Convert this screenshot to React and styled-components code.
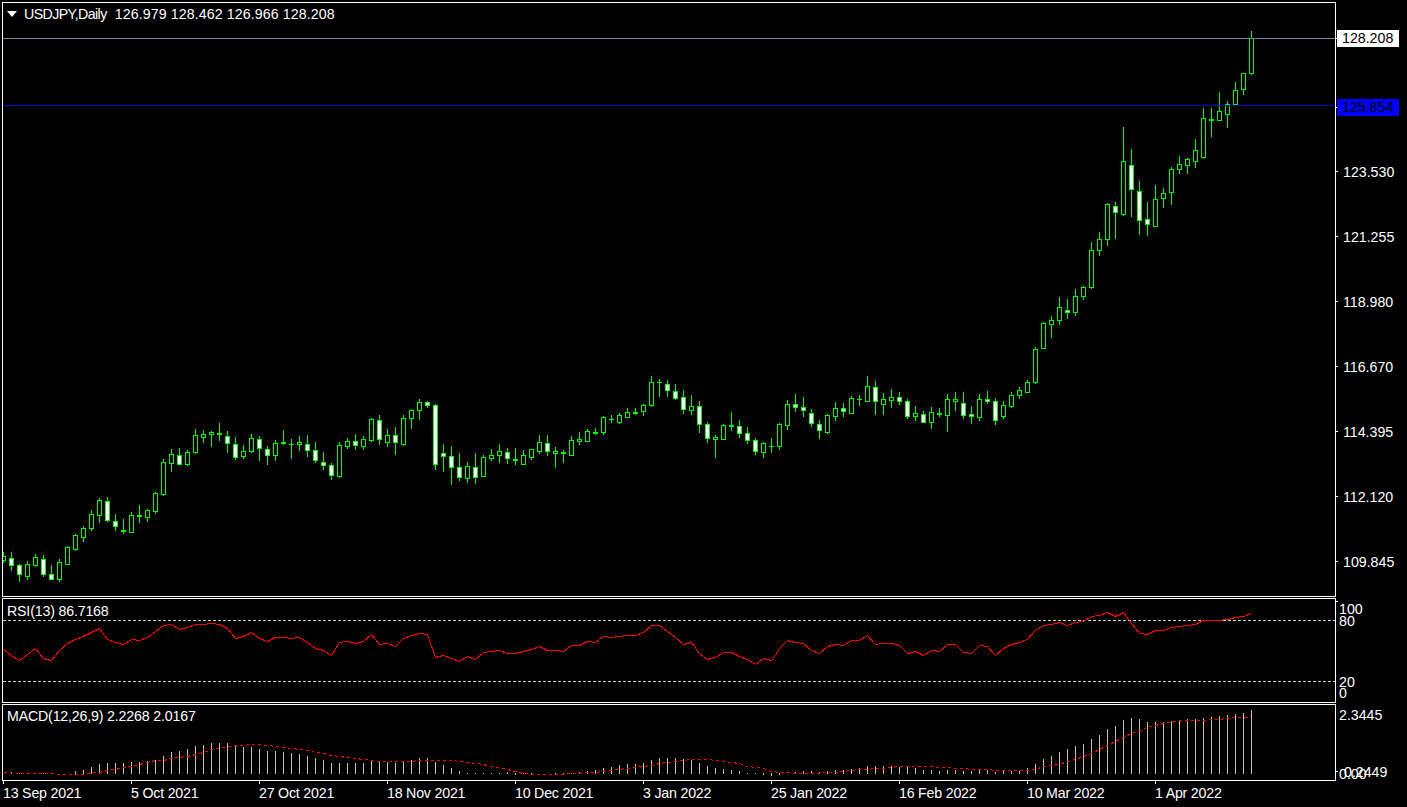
import React from "react";
import styled, { createGlobalStyle } from "styled-components";

const GlobalStyle = createGlobalStyle`
  html, body { margin: 0; padding: 0; background: #000; }
  body { width: 1407px; height: 807px; overflow: hidden; font-family: "Liberation Sans", Arial, sans-serif; }
`;

const GREEN = "#00ff00";

/* Readings per candle: [high, bodyTop, bodyBottom, low, bear]. Values are 1/3px offsets from a base line. */
const candleSegments = [
  { base: 390, rows: [
    [487,499,512,518,0],[487,505,527,542,1],[522,526,554,575,1],[514,523,560,569,0],[492,502,527,530,0],
    [495,508,554,560,1],[526,553,569,569,1],[508,517,569,575,0],[469,472,524,524,0],[433,436,479,482,0],
    [409,415,443,456,0],[361,373,416,422,0],[325,331,377,399,0],[322,334,392,396,1],[373,394,410,422,1],
    [388,421,425,431,0],[367,376,428,428,0],[346,376,380,399,0],[357,361,383,395,0],[307,310,365,371,0],
    [208,217,314,317,0],[178,193,221,245,0],[175,196,224,224,1],[181,187,224,227,0],[117,136,188,191,0],
    [121,133,143,159,0],[124,127,134,171,0],[99,130,134,153,0],[124,139,161,189,1],[141,163,203,209,1],
    [165,184,200,206,0],[132,145,185,188,0],[139,148,176,212,1],[168,178,197,224,1],[151,160,197,212,0],
    [121,157,161,165,0],[148,163,165,207,0],[139,157,164,183,0],[136,163,182,201,1],[156,181,212,218,1],
    [187,217,227,240,1],[220,226,257,269,1],[157,166,260,263,0],
  ]},
  { base: 370, rows: [
    [205,214,230,237,0],[193,214,227,240,1],[199,208,230,240,0],[145,148,212,215,0],[136,151,209,224,1],
    [178,196,218,231,0],[171,196,218,255,1],[136,145,224,227,0],[118,121,146,177,0],[88,97,122,149,0],
    [94,97,107,114,1],[103,106,284,300,1],[222,250,260,306,1],[228,259,293,345,1],[249,292,323,333,1],
    [277,289,326,339,0],[249,292,323,342,1],[256,262,320,321,0],[237,256,266,273,0],[222,244,258,279,0],
    [235,247,266,282,1],[235,268,272,285,0],[240,256,284,285,0],[238,238,263,270,0],[195,217,245,252,0],
    [195,220,245,258,1],[232,244,251,294,0],[241,248,250,279,0],[198,211,257,258,0],[187,208,215,225,0],
    [178,184,215,216,0],[175,187,191,195,0],[139,142,188,195,0],[136,148,150,159,0],[130,136,158,162,0],
    [114,127,143,143,0],[114,127,131,135,0],[103,106,125,138,0],[18,37,107,110,0],[27,36,38,81,0],
    [30,43,62,81,1],[42,64,86,90,1],
  ]},
  { base: 360, rows: [
    [91,112,149,162,1],[105,139,152,165,0],[123,139,194,219,1],[187,193,236,249,1],[226,232,239,294,0],
    [193,196,239,240,0],[156,196,200,213,0],[180,199,221,234,1],[202,220,242,252,1],[235,241,275,285,1],
    [246,250,278,294,0],[235,259,261,279,0],[190,193,260,270,0],[120,133,197,210,0],[102,133,143,156,1],
    [111,142,152,171,1],[148,160,191,201,1],[180,193,212,237,1],[162,166,218,222,0],[126,145,170,183,0],
    [129,145,155,171,1],[108,115,161,162,0],[105,118,120,138,0],[48,79,125,126,0],[63,82,125,165,1],
    [99,118,134,165,0],[87,112,122,144,0],[96,112,125,135,1],[117,124,170,177,1],[138,160,170,183,0],
    [153,163,188,189,1],[141,157,188,207,0],[144,160,164,171,0],[102,118,167,216,0],[96,118,125,153,0],
    [96,130,167,177,1],[138,163,170,192,1],[102,118,173,183,0],[93,118,125,132,1],[114,124,182,195,1],
  ]},
  { base: 20, rows: [
    [1143,1156,1190,1195,0],[1117,1126,1160,1164,0],[1102,1111,1127,1137,0],[1080,1087,1118,1118,0],[981,988,1088,1091,0],
    [906,910,986,986,0],[888,901,914,954,0],[831,862,902,915,0],[837,871,878,897,1],[807,829,878,888,0],
    [798,802,830,840,0],[666,691,803,807,0],[636,658,692,708,0],[549,553,659,678,0],[546,559,578,657,1],
    [321,424,584,588,0],[387,436,509,591,1],[483,514,602,645,1],[546,598,614,648,1],[495,538,620,621,0],
    [504,520,536,564,0],[441,448,518,555,0],[408,433,449,462,0],[414,418,437,462,0],[357,391,425,444,0],
    [264,295,413,417,0],[264,298,302,351,0],[216,274,302,303,0],[243,253,284,324,0],[186,211,255,255,0],
    [160,160,209,225,0],[33,55,161,165,0],
  ]},
];

const candles = candleSegments.flatMap(({ base, rows }) =>
  rows.map(([hi, top, bot, lo, bear]) => ({
    hi: base + Math.floor(hi / 3),
    top: base + Math.floor(top / 3),
    bot: base + Math.ceil(bot / 3),
    lo: base + Math.ceil(lo / 3),
    bear: !!bear,
  }))
);

const colX = (i) => 3 + 8 * i;

const toY = (base, list) => list.map((z) => (z === null ? null : base + Math.floor(z / 3)));

const rsi = [
  ...toY(590, [178,195,211,193,176,204,211,181,160,148,140,127,115,148,157,163,148,150,142,125,106,103,118,112,103,103,100,102,115,145,139,127,145,154,142,142,145,142,157,175,181,196,157,154,160,154,133,163,160,170]),
  ...toY(600, [115,105,100,104,172,167,176,185,170,178,157,155,151,160,160,155,148,139,151,151,155,136,135,124,127,109,112,108,105,105,97,76,76,94,112]),
  ...toY(600, [133,127,160,178,172,157,157,170,178,193,175,181,145,121,127,130,151,160,139,133,136,121,121,106,133,130,130,136,160,154,166,151,154,133,133,157,160,136,139,166,145,133,127,118,91,76,72,67,76,67,63,49,46,37,49,37,70,100,103,91,91,82,79,76,73,61,61,61,58,52,49,40]),
];

const macdBars = [
  ...toY(590, [null,550,550,null,null,550,null,null,null,545,541,531,522,519,519,519,516,516,513,510,498,486,483,477,468,465,459,459,459,468,471,471,477,483,483,486,489,492,498,504,510,519,519,519,519,519,513,516,516,519]),
  ...toY(735, [78,76,69,69,81,90,99,108,114,114,114,114,114,112,114,114,114,null,null,114,114,114,111,108,105,99,96,90,87,87,84,75,69,69,69,72,75,84,93,99]),
  ...toY(735, [102,105,108,114,114,114,114,114,null,111,108,108,111,108,105,105,102,99,93,93,93,93,96,96,99,105,105,108,105,105,108,108,105,105,111,108,108,108,99,87]),
  ...toY(590, [507,498,486,477,468,462,447,435,417,408,390,384,387,396,396,396,393,390,387,387,384,381,378,375,372,369,360]),
];
const macdBelow = { 6: 776, 64: 775, 95: 775, 96: 776, 97: 775 };

const signal = [
  ...toY(590, [548,548,549,550,550,550,551,552,553,553,552,547,546,541,537,533,528,522,518,512,510,505,503,498,493,487,479,476,470,467,465,464,464,465,468,472,474,477,480,483,490,495,500,502,505,507,510,513,515,515]),
  ...toY(735, [78,78,77,76,76,76,77,79,82,85,89,93,97,102,109,114,117,118,118,118,117,116,114,112,112,109,106,103,100,98,95,90,85,82,79,76,73,73,73,75]),
  ...toY(735, [79,82,85,94,97,100,109,112,112,115,115,115,115,112,112,109,106,103,103,100,100,97,94,94,94,94,94,97,97,100,100,103,103,103,106,106,106,106,106,103]),
  ...toY(590, [528,527,524,515,507,498,489,477,465,453,441,429,420,412,405,400,396,392,390,391,390,389,388,385,383,381,378]),
];

const linePoints = (ys) => ys.map((y, i) => `${colX(i) + 0.5},${y + 0.5}`).join(" ");

const priceTicks = ["123.530", "121.255", "118.980", "116.670", "114.395", "112.120", "109.845"];
const dates = ["13 Sep 2021", "5 Oct 2021", "27 Oct 2021", "18 Nov 2021", "10 Dec 2021", "3 Jan 2022", "25 Jan 2022", "16 Feb 2022", "10 Mar 2022", "1 Apr 2022"];

const Terminal = styled.div`
  width: 1407px;
  height: 807px;
  box-sizing: border-box;
  padding: 2px 0 0 2px;
  display: flex;
  flex-direction: column;
  gap: 1px;
  background: #000;
  color: #fff;
  font-size: 14.2px;
`;

const PaneRow = styled.div`
  display: flex;
  height: ${(p) => p.$height}px;
`;

const Pane = styled.div`
  position: relative;
  box-sizing: border-box;
  width: 1334px;
  height: 100%;
  border: 1px solid #fff;
  background: #000;
`;

const Plot = styled.svg`
  display: block;
  shape-rendering: crispEdges;
`;

const Legend = styled.div`
  position: absolute;
  left: 4px;
  top: ${(p) => p.$top}px;
  display: flex;
  align-items: center;
  gap: 7px;
  line-height: 16px;
  white-space: pre;
  letter-spacing: -0.17px;
  color: #fff;
`;

const MenuArrow = styled.span`
  width: 0;
  height: 0;
  border-left: 5px solid transparent;
  border-right: 5px solid transparent;
  border-top: 6px solid #fff;
`;

const SymbolName = styled.span`
  letter-spacing: -0.58px;
`;

const Quotes = styled.span`
  letter-spacing: 0.1px;
`;

const QuoteLine = styled.span`
  display: inline-block;
`;

const Axis = styled.div`
  position: relative;
  display: flex;
  flex-direction: column;
  width: 71px;
  padding-top: ${(p) => p.$top}px;
  box-sizing: border-box;
`;

const AxisMark = styled.span`
  position: absolute;
  left: 0;
  top: ${(p) => p.$top}px;
  width: 2px;
  height: 1px;
  background: #fff;
`;

const PriceTag = styled.div`
  display: flex;
  align-items: center;
  height: 17px;
  margin-top: ${(p) => p.$gap || 0}px;
  &::before {
    content: "";
    width: 1px;
    height: 1px;
    background: #fff;
    flex: none;
  }
`;

const TagBox = styled.span`
  width: 62px;
  height: 17px;
  box-sizing: border-box;
  padding-left: 5px;
  line-height: 17px;
  color: #000;
  background: ${(p) => p.$bg};
`;

const PriceTick = styled.div`
  display: flex;
  align-items: center;
  height: 17px;
  margin-top: ${(p) => p.$gap}px;
  &::before {
    content: "";
    width: 2px;
    height: 1px;
    margin-right: 5px;
    background: #fff;
    flex: none;
  }
`;

const ScaleLabel = styled.div`
  height: ${(p) => p.$height || 12}px;
  margin-top: ${(p) => p.$gap || 0}px;
  padding-left: 3px;
  line-height: 12px;
`;

const OverlapLabel = styled.div`
  position: absolute;
  left: 8px;
  top: 62px;
  line-height: 12px;
`;

const TimeAxis = styled.div`
  display: flex;
  margin-left: 1px;
  margin-top: -1px;
`;

const TimeLabel = styled.div`
  width: 128px;
  line-height: 18px;
  white-space: nowrap;
  letter-spacing: -0.2px;
  &::before {
    content: "";
    display: block;
    width: 1px;
    height: 3px;
    background: #fff;
  }
`;

function PriceChart() {
  return (
    <Plot width="1332" height="593" viewBox="3 3 1332 593">
      {candles.map((c, i) => {
        const x = colX(i);
        const h = c.bot - c.top - 1;
        return (
          <g key={i}>
            <line x1={x + 0.5} x2={x + 0.5} y1={c.hi} y2={c.lo} stroke={GREEN} />
            {h > 0 ? (
              <rect x={x - 1.5} y={c.top + 0.5} width="4" height={h} fill={c.bear ? "#fff" : "#000"} stroke={GREEN} />
            ) : (
              <rect x={x - 2} y={c.top} width="5" height={c.bot - c.top} fill={GREEN} />
            )}
          </g>
        );
      })}
      <line x1="3" x2="1335" y1="38.5" y2="38.5" stroke="#778899" />
      <line x1="3" x2="1335" y1="105.5" y2="105.5" stroke="#0000cd" />
    </Plot>
  );
}

function RsiChart() {
  return (
    <Plot width="1332" height="103" viewBox="3 599 1332 103">
      <line x1="3" x2="1335" y1="620.5" y2="620.5" stroke="#d3d3d3" strokeDasharray="3 2" />
      <line x1="3" x2="1335" y1="681.5" y2="681.5" stroke="#d3d3d3" strokeDasharray="3 2" />
      <polyline points={linePoints(rsi)} fill="none" stroke="#ff0000" />
    </Plot>
  );
}

function MacdChart() {
  return (
    <Plot width="1332" height="75" viewBox="3 705 1332 75">
      {macdBars.map((y, i) => {
        if (y === null) return null;
        const x = colX(i);
        return <line key={i} x1={x + 0.5} x2={x + 0.5} y1={y} y2={macdBelow[i] || 774} stroke="#c0c0c0" />;
      })}
      <polyline points={linePoints(signal)} fill="none" stroke="#ff0000" strokeDasharray="3 3" />
    </Plot>
  );
}

export default function App() {
  return (
    <>
      <GlobalStyle />
      <Terminal>
        <PaneRow $height={595}>
          <Pane>
            <PriceChart />
            <Legend $top={3}>
              <MenuArrow />
              <QuoteLine>
                <SymbolName>USDJPY,Daily</SymbolName>
                <Quotes>{"  126.979 128.462 126.966 128.208"}</Quotes>
              </QuoteLine>
            </Legend>
          </Pane>
          <Axis $top={28}>
            <PriceTag><TagBox $bg="#fff">128.208</TagBox></PriceTag>
            <PriceTag $gap={52}><TagBox $bg="#0000ff">125.854</TagBox></PriceTag>
            {priceTicks.map((p, i) => (
              <PriceTick key={p} $gap={i === 0 ? 47 : 48}>{p}</PriceTick>
            ))}
          </Axis>
        </PaneRow>
        <PaneRow $height={105}>
          <Pane>
            <RsiChart />
            <Legend $top={4}>RSI(13) 86.7168</Legend>
          </Pane>
          <Axis $top={5}>
            <AxisMark $top={3} />
            <ScaleLabel>100</ScaleLabel>
            <ScaleLabel>80</ScaleLabel>
            <ScaleLabel $gap={49} $height={11}>20</ScaleLabel>
            <ScaleLabel>0</ScaleLabel>
          </Axis>
        </PaneRow>
        <PaneRow $height={77}>
          <Pane>
            <MacdChart />
            <Legend $top={3}>MACD(12,26,9) 2.2268 2.0167</Legend>
          </Pane>
          <Axis $top={5}>
            <AxisMark $top={67} />
            <ScaleLabel>2.3445</ScaleLabel>
            <ScaleLabel $gap={47}>0.00</ScaleLabel>
            <OverlapLabel>0.2449</OverlapLabel>
          </Axis>
        </PaneRow>
        <TimeAxis>
          {dates.map((d) => (
            <TimeLabel key={d}>{d}</TimeLabel>
          ))}
        </TimeAxis>
      </Terminal>
    </>
  );
}
